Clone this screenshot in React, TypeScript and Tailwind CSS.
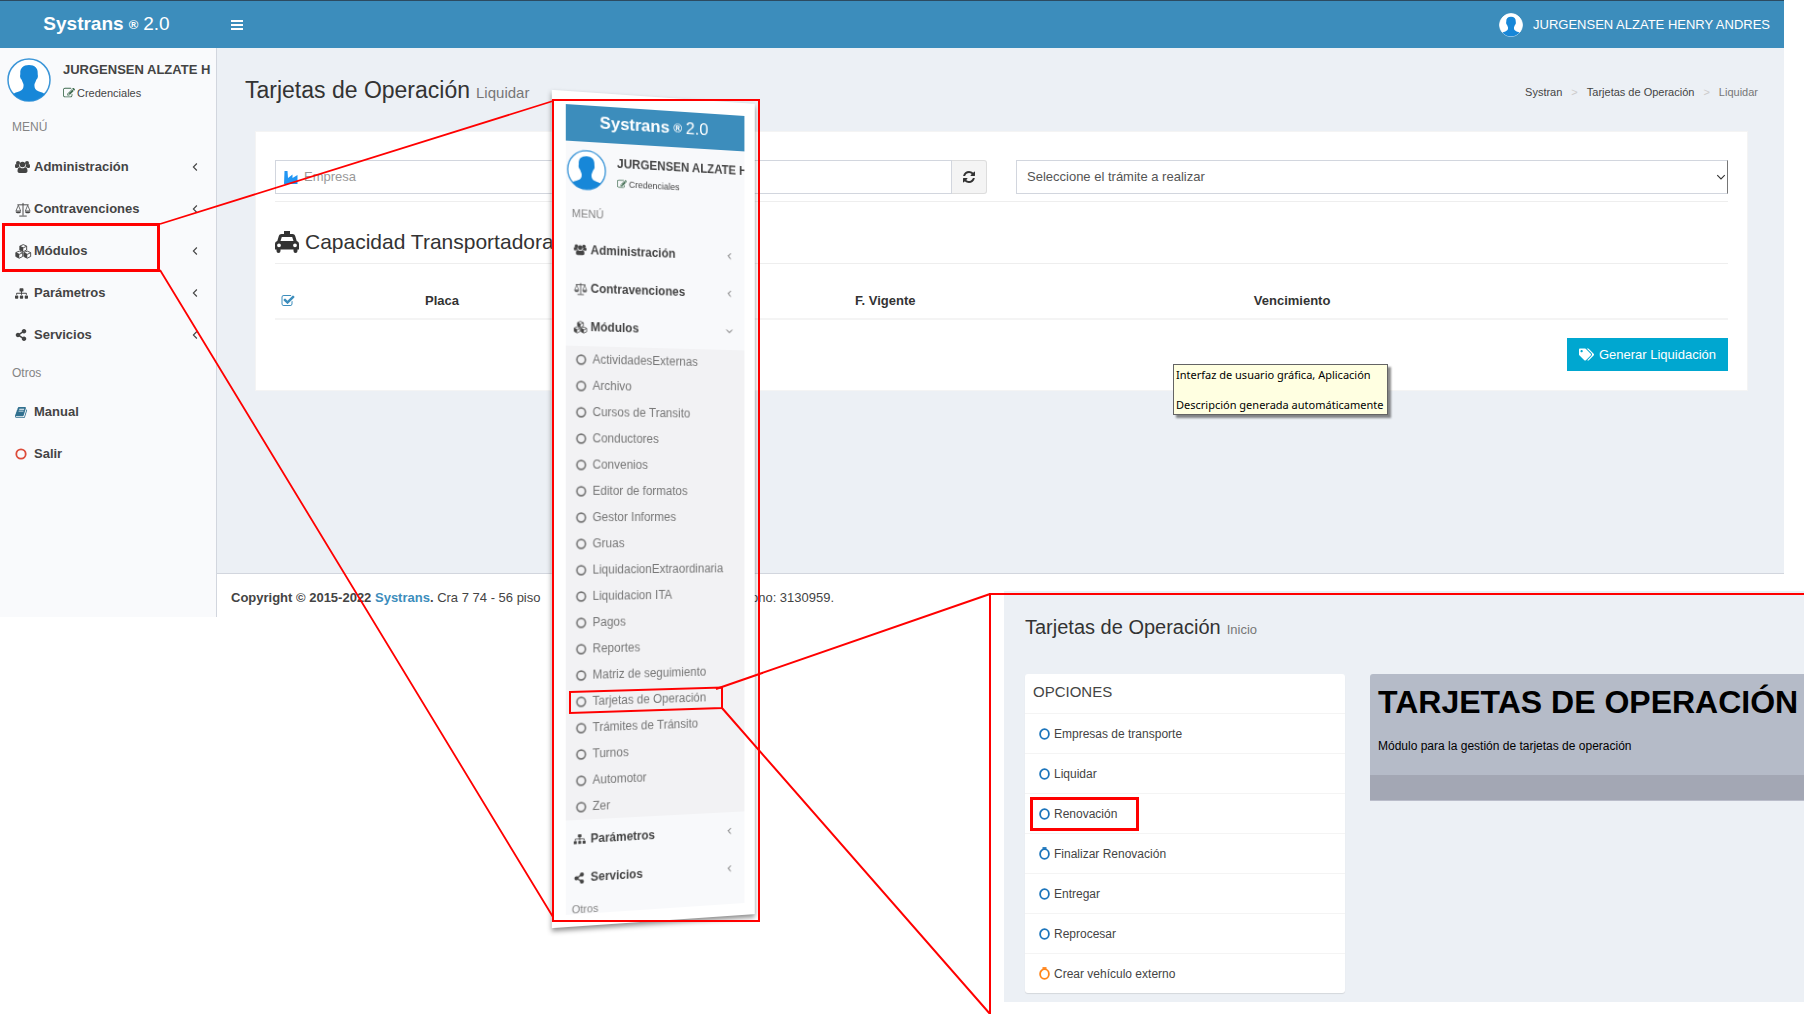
import React from "react";
import { FaShareAlt, FaSitemap, FaTags } from "react-icons/fa";

type IconProps = { className?: string };

const UsersIcon = ({ className }: IconProps) => (
  <svg viewBox="0 0 30 28" fill="currentColor" className={className} aria-hidden="true">
    <circle cx="6" cy="6" r="4" />
    <circle cx="24" cy="6" r="4" />
    <circle cx="15" cy="9" r="5.6" />
    <path d="M9.3 14C7.4 14 5.700 14.800 4.500 16H3C1.300 16 0 15.200 0 13.400 0 12 0 8 2 8c.4 0 2 1.400 4 1.400.7 0 1.400-.1 2-.3V10c0 1.400.5 2.800 1.300 4z" />
    <path d="M20.700 14c1.900 0 3.600.8 4.800 2H27c1.700 0 3-.8 3-2.600C30 12 30 8 28 8c-.4 0-2 1.400-4 1.400-.7 0-1.400-.1-2-.3V10c0 1.400-.5 2.800-1.300 4z" />
    <path d="M20 14.500c4 .1 5 4 5 7.500 0 2.600-1.600 4-4 4H9c-2.400 0-4-1.400-4-4 0-3.500 1-7.400 5-7.500.4 0 2 2.100 5 2.100s4.600-2.100 5-2.100z" />
  </svg>
);

const ScaleIcon = ({ className }: IconProps) => (
  <svg viewBox="0 0 34 32" fill="none" stroke="currentColor" strokeWidth="2" className={className} aria-hidden="true">
    <path d="M17 2v27M9 30h16M5 6h24" />
    <path d="M7 7 2 19h10zM27 7l-5 12h10z" strokeWidth="1.600" />
    <path d="M1 20h12c-1 3-3 4-6 4s-5-1-6-4zM21 20h12c-1 3-3 4-6 4s-5-1-6-4z" fill="currentColor" stroke="none" />
  </svg>
);

const Cube = ({ x, y }: { x: number; y: number }) => (
  <g transform={`translate(${x} ${y})`}>
    <path d="M8 1.200 14.800 4.200V12L8 15.400 1.200 12V4.200z" fill="none" stroke="currentColor" strokeWidth="1.800" />
    <path d="M8 7.500V15.400L1.200 12V4.500z" fill="currentColor" />
    <path d="M1.200 4.500 8 7.600l6.800-3.100" fill="none" stroke="currentColor" strokeWidth="1.800" />
  </g>
);

const CubesIcon = ({ className }: IconProps) => (
  <svg viewBox="0 0 33 30" className={className} aria-hidden="true">
    <Cube x={8} y={0} />
    <Cube x={0} y={13} />
    <Cube x={16} y={13} />
  </svg>
);

const BookIcon = ({ className }: IconProps) => (
  <svg viewBox="0 0 1792 1792" fill="currentColor" className={className} aria-hidden="true">
    <path d="M1639 478q40 57 18 129l-275 906q-19 64-76.5 107.500t-122.500 43.500h-923q-77 0-148.500-53.500t-99.500-131.500q-24-67-2-127 0-4 3-27t4-37q1-8-3-21.500t-3-19.500q2-11 8-21t16.500-23.500 16.500-23.500q23-38 45-91.500t30-91.500q3-10 .5-30t-.5-28q3-11 17-28t17-23q21-36 42-92t25-90q1-9-2.500-32t.5-28q4-13 22-30.500t22-22.500q19-26 42.500-84.500t27.500-96.500q1-8-3-25.500t-2-26.500q2-8 9-18t18-23 17-21q8-12 16.500-30.500t15-35 16-36 19.500-32 26.500-23.500 36-11.500 47.500 5.500l-1 3q38-9 51-9h761q74 0 114 56t18 130l-274 906q-36 119-71.500 153.500t-128.500 34.500h-869q-27 0-38 15-11 16-1 43 24 70 144 70h923q29 0 56-15.500t35-41.500l300-987q7-22 5-57 38 15 59 43zm-1064 2q-4 13 2 22.500t20 9.500h608q13 0 25.500-9.500t16.500-22.500l21-64q4-13-2-22.500t-20-9.500h-608q-13 0-25.500 9.500t-16.500 22.500zm-83 256q-4 13 2 22.500t20 9.500h608q13 0 25.500-9.500t16.500-22.500l21-64q4-13-2-22.500t-20-9.500h-608q-13 0-25.500 9.500t-16.500 22.500z" />
  </svg>
);

const EditIcon = ({ className }: IconProps) => (
  <svg viewBox="0 0 1792 1792" fill="currentColor" className={className} aria-hidden="true">
    <path d="M888 1184l116-116-152-152-116 116v56h96v96h56zm440-720q-16-16-33 1l-350 350q-17 17-1 33t33-1l350-350q17-17 1-33zm80 594v190q0 119-84.500 203.500t-203.500 84.500h-832q-119 0-203.500-84.500t-84.500-203.500v-832q0-119 84.500-203.500t203.500-84.500h832q63 0 117 25 15 7 18 23 3 17-9 29l-49 49q-14 14-32 8-23-6-45-6h-832q-66 0-113 47t-47 113v832q0 66 47 113t113 47h832q66 0 113-47t47-113v-126q0-13 9-22l64-64q15-15 35-7t20 29zm-96-738l288 288-672 672h-288v-288zm444 132l-92 92-288-288 92-92q28-28 68-28t68 28l152 152q28 28 28 68t-28 68z" />
  </svg>
);

const CheckIcon = ({ className }: IconProps) => (
  <svg viewBox="0 0 1792 1792" fill="currentColor" className={className} aria-hidden="true">
    <path d="M1472 930v318q0 119-84.500 203.500t-203.500 84.500h-832q-119 0-203.500-84.500t-84.500-203.500v-832q0-119 84.500-203.500t203.500-84.500h832q63 0 117 25 15 7 18 23 3 17-9 29l-49 49q-10 10-23 10-3 0-9-2-23-6-45-6h-832q-66 0-113 47t-47 113v832q0 66 47 113t113 47h832q66 0 113-47t47-113v-254q0-13 9-22l64-64q10-10 23-10 6 0 12 3 20 8 20 29zm231-489l-814 814q-24 24-57 24t-57-24l-430-430q-24-24-24-57t24-57l110-110q24-24 57-24t57 24l263 263 647-647q24-24 57-24t57 24l110 110q24 24 24 57t-24 57z" />
  </svg>
);

const RefreshIcon = ({ className }: IconProps) => (
  <svg viewBox="0 0 1792 1792" fill="currentColor" className={className} aria-hidden="true">
    <path d="M1639 1056q0 5-1 7-64 268-268 434.500t-478 166.500q-146 0-282.500-55t-243.500-157l-129 129q-19 19-45 19t-45-19-19-45v-448q0-26 19-45t45-19h448q26 0 45 19t19 45-19 45l-137 137q71 66 161 102t187 36q134 0 250-65t186-179q11-17 53-117 8-23 30-23h192q13 0 22.500 9.500t9.500 22.500zm25-800v448q0 26-19 45t-45 19h-448q-26 0-45-19t-19-45 19-45l138-138q-148-137-349-137-134 0-250 65t-186 179q-11 17-53 117-8 23-30 23h-199q-13 0-22.500-9.500t-9.500-22.500v-7q65-268 270-434.500t480-166.500q146 0 284 55.500t245 156.500l130-129q19-19 45-19t45 19 19 45z" />
  </svg>
);

const IndustryIcon = ({ className }: IconProps) => (
  <svg viewBox="0 0 14 13" fill="currentColor" className={className} aria-hidden="true">
    <path d="M.5 0h3l.5 7 4.500-3.500V7L13.500 4v9H0z" />
  </svg>
);

const TaxiIcon = ({ className }: IconProps) => (
  <svg viewBox="0 0 24 22" className={className} aria-hidden="true">
    <path
      fill="currentColor"
      fillRule="evenodd"
      d="M9 0h6v3h2.500c1.400 0 2.300.8 2.700 2l1.500 5c1.400.3 2.300 1.500 2.300 3v5.500h-1.500V20a2 2 0 0 1-4 0v-1.500h-13V20a2 2 0 0 1-4 0v-1.500H0V13c0-1.500.9-2.700 2.300-3l1.500-5c.4-1.200 1.300-2 2.700-2H9zM6.800 6 5.500 10h13L17.200 6zM4 12.400a1.900 1.900 0 1 0 0 3.800 1.900 1.900 0 0 0 0-3.800zm16 0a1.900 1.900 0 1 0 0 3.800 1.900 1.900 0 0 0 0-3.800z"
    />
  </svg>
);

const RingIcon = ({ className }: IconProps) => (
  <svg viewBox="0 0 12 12" fill="none" stroke="currentColor" strokeWidth="1.800" className={className} aria-hidden="true">
    <circle cx="6" cy="6" r="4.700" />
  </svg>
);

const OptionRing = ({ className, knob }: IconProps & { knob?: boolean }) => (
  <svg viewBox="0 0 11 13" fill="none" stroke="currentColor" strokeWidth="1.800" className={className} aria-hidden="true">
    <ellipse cx="5.500" cy="7" rx="4.400" ry="4.900" />
    {knob && <path d="M3.500 1h4" />}
  </svg>
);

const AngleIcon = ({ className, down }: IconProps & { down?: boolean }) => (
  <svg viewBox="0 0 8 8" fill="none" stroke="currentColor" strokeWidth="0.900" className={className} aria-hidden="true">
    <path d={down ? "M1 2.500l3 3 3-3" : "M5.500 1.200l-2.800 2.800 2.800 2.800"} />
  </svg>
);

const Avatar = ({ className, ring = true }: IconProps & { ring?: boolean }) => (
  <svg viewBox="0 0 44 44" className={className} aria-hidden="true">
    <circle cx="22" cy="22" r="21" fill="#fff" stroke={ring ? "#3c96d8" : "#fff"} strokeWidth="1.500" />
    <path
      fill="#1787d8"
      d="M22 7c5.800 0 9 3 8.700 8.500-.1 1.500.6 2.300 0 4-.4 1.500-1.200 1.600-1.500 2.600-.7 2.300-1.600 3.200-1.800 5 0 3.500 1.200 5 4 6.200 3 1.300 5 1.300 6.300 2.800C33.500 40.500 28 43 22 43S10.500 40.500 6.300 36.100c1.300-1.500 3.300-1.500 6.300-2.800 2.800-1.200 4-2.700 4-6.200-.2-1.800-1.100-2.700-1.800-5-.3-1-1.100-1.100-1.500-2.600-.6-1.700.1-2.500 0-4C13 10 16.200 7 22 7z"
    />
  </svg>
);

const submenu = [
  "ActividadesExternas",
  "Archivo",
  "Cursos de Transito",
  "Conductores",
  "Convenios",
  "Editor de formatos",
  "Gestor Informes",
  "Gruas",
  "LiquidacionExtraordinaria",
  "Liquidacion ITA",
  "Pagos",
  "Reportes",
  "Matriz de seguimiento",
  "Tarjetas de Operación",
  "Trámites de Tránsito",
  "Turnos",
  "Automotor",
  "Zer",
];

const options: { label: string; knob?: boolean; color: string }[] = [
  { label: "Empresas de transporte", color: "text-[#1c75bc]" },
  { label: "Liquidar", color: "text-[#1c75bc]" },
  { label: "Renovación", color: "text-[#1c75bc]" },
  { label: "Finalizar Renovación", color: "text-[#1c75bc]", knob: true },
  { label: "Entregar", color: "text-[#1c75bc]" },
  { label: "Reprocesar", color: "text-[#1c75bc]" },
  { label: "Crear vehículo externo", color: "text-[#ff851b]", knob: true },
];

type MenuRowProps = { icon: React.ReactNode; label: string; arrow?: boolean };

const MenuRow = ({ icon, label, arrow = true }: MenuRowProps) => (
  <li>
    <a href="#" className="flex h-[42px] items-center pr-4 pl-[15px] text-[13px] font-bold text-[#444]">
      <span className="flex w-[19px] items-center">{icon}</span>
      <span className="flex-1">{label}</span>
      {arrow && <AngleIcon className="size-2.5" />}
    </a>
  </li>
);

const FloatRow = ({ icon, label, down }: { icon: React.ReactNode; label: string; down?: boolean }) => (
  <li>
    <a href="#" className="flex h-[38px] items-center pr-3 pl-2 text-xs font-bold text-[#444]">
      <span className="flex w-[17px] items-center">{icon}</span>
      <span className="flex-1">{label}</span>
      <AngleIcon down={down} className="size-2" />
    </a>
  </li>
);

const Sidebar = () => (
  <aside className="w-[217px] shrink-0 border-r border-[#d2d6de] bg-[#f9fafc]">
    <div className="flex h-[60px] items-start gap-3 pt-2.5 pl-[7px]">
      <Avatar className="size-11 shrink-0" />
      <div className="whitespace-nowrap">
        <p className="text-[13px] leading-6 font-bold text-[#444]">JURGENSEN ALZATE H</p>
        <a href="#" className="flex items-center gap-0.5 text-[11px] leading-[22px] text-[#444]">
          <EditIcon className="size-3 text-[#3f6b4f]" />
          Credenciales
        </a>
      </div>
    </div>
    <nav aria-label="Menú principal">
      <h2 className="h-[38px] pl-3 text-xs leading-[38px] text-[#848484]">MENÚ</h2>
      <ul>
        <MenuRow icon={<UsersIcon className="h-3.5 w-[15px]" />} label="Administración" />
        <MenuRow icon={<ScaleIcon className="h-[15px] w-4" />} label="Contravenciones" />
        <MenuRow icon={<CubesIcon className="h-[15px] w-[17px]" />} label="Módulos" />
        <MenuRow icon={<FaSitemap className="size-[13px]" />} label="Parámetros" />
        <MenuRow icon={<FaShareAlt className="size-3" />} label="Servicios" />
      </ul>
      <h2 className="h-[35px] pl-3 text-xs leading-[35px] text-[#848484]">Otros</h2>
      <ul>
        <MenuRow icon={<BookIcon className="size-[13px] text-[#31708f]" />} label="Manual" arrow={false} />
        <MenuRow icon={<RingIcon className="size-3 text-[#dd4b39]" />} label="Salir" arrow={false} />
      </ul>
    </nav>
  </aside>
);

const MainCard = () => (
  <section className="border border-[#f4f4f4] bg-white px-[19px] pt-7 pb-[18px]">
    <div className="flex h-[34px] gap-[29px]">
      <div className="flex flex-[712]">
        <label className="flex flex-1 items-center gap-1.5 border border-[#d2d6de] pl-2">
          <IndustryIcon className="h-[13px] w-3.5 text-[#2196f3]" />
          <input
            aria-label="Empresa"
            placeholder="Empresa"
            className="min-w-0 flex-1 text-[13px] outline-none placeholder:text-[#999]"
          />
        </label>
        <button
          type="button"
          aria-label="Actualizar"
          className="flex w-[35px] items-center justify-center rounded-r-[3px] border border-l-0 border-[#ddd] bg-[#f4f4f4] text-[#333]"
        >
          <RefreshIcon className="size-3.5" />
        </button>
      </div>
      <div className="relative flex flex-[712]">
        <select
          aria-label="Trámite"
          className="w-full appearance-none border border-[#d2d6de] border-r-[#767676] bg-white px-2.5 text-[13px] text-[#555] outline-none"
        >
          <option>Seleccione el trámite a realizar</option>
        </select>
        <AngleIcon down className="pointer-events-none absolute top-3 right-0.5 size-2.5 text-[#333]" />
      </div>
    </div>
    <div className="mt-[7px] border-t border-[#eee]" />
    <h2 className="flex h-[62px] items-center gap-1.5 border-b border-[#eee] pt-[18px] text-[21px] text-[#333]">
      <TaxiIcon className="h-[22px] w-6" />
      Capacidad Transportadora
    </h2>
    <table className="w-full table-fixed text-[13px] text-[#333]">
      <colgroup>
        <col className="w-[2%]" />
        <col className="w-[19%]" />
        <col className="w-[8%]" />
        <col className="w-[26%]" />
        <col className="w-[30%]" />
        <col className="w-[15%]" />
      </colgroup>
      <thead>
        <tr className="h-[55px] border-b-2 border-[#f4f4f4]">
          <th className="pt-5">
            <label className="relative ml-1.5 block size-3.5">
              <input type="checkbox" defaultChecked aria-label="Seleccionar todos" className="absolute inset-0 appearance-none" />
              <CheckIcon className="size-3.5 text-[#3c8dbc]" />
            </label>
          </th>
          <th className="pt-5">Placa</th>
          <th />
          <th className="pt-5">F. Vigente</th>
          <th className="pt-5">Vencimiento</th>
          <th />
        </tr>
      </thead>
    </table>
    <div className="flex justify-end pt-[18px] pb-px">
      <button type="button" className="flex h-[33px] items-center gap-[5px] bg-[#00a7d0] px-3 text-[13px] text-white">
        <FaTags className="h-[13px] w-[15px]" />
        Generar Liquidación
      </button>
    </div>
  </section>
);

const FloatingMenu = () => (
  <div className="absolute top-[97px] left-[550px] h-[824px] w-[210px] bg-white pt-[13px] pr-[11px] pl-3.5 shadow-[0_3px_5px_rgba(0,0,0,0.45)] transform-[perspective(1600px)_rotateY(15deg)]">
    <div className="h-[799px] overflow-hidden bg-[#f8f9fb]">
      <p className="flex h-9 items-center justify-center gap-1 bg-[#3c8dbc] pr-1 pb-0.5 text-[17px] text-white">
        <b>Systrans</b>
        <b className="text-xs">®</b>
        2.0
      </p>
      <div className="flex h-[60px] items-start gap-[11px] pt-2 pl-px">
        <Avatar className="size-10 shrink-0" />
        <div className="whitespace-nowrap">
          <p className="pt-1 text-xs leading-4 font-bold text-[#444]">JURGENSEN ALZATE H</p>
          <a href="#" className="flex items-center gap-0.5 text-[9px] leading-6 text-[#444]">
            <EditIcon className="size-2.5 text-[#3f6b4f]" />
            Credenciales
          </a>
        </div>
      </div>
      <h2 className="h-7 pl-1.5 text-[11px] leading-[22px] text-[#848484]">MENÚ</h2>
      <ul>
        <FloatRow icon={<UsersIcon className="h-3 w-[13px]" />} label="Administración" />
        <FloatRow icon={<ScaleIcon className="h-[13px] w-3.5" />} label="Contravenciones" />
        <FloatRow icon={<CubesIcon className="h-[13px] w-3.5" />} label="Módulos" down />
      </ul>
      <ul className="bg-[#f2f2f4]">
        {submenu.map((label) => (
          <li key={label}>
            <a href="#" className="flex h-[26px] items-center gap-1.5 pl-2.5 text-xs text-[#777]">
              <RingIcon className="size-[11px]" />
              {label}
            </a>
          </li>
        ))}
      </ul>
      <ul>
        <FloatRow icon={<FaSitemap className="size-3" />} label="Parámetros" />
        <FloatRow icon={<FaShareAlt className="size-[11px]" />} label="Servicios" />
      </ul>
      <h2 className="pt-1 pl-1.5 text-[11px] leading-4 text-[#848484]">Otros</h2>
    </div>
  </div>
);

const OptionsPanel = () => (
  <section className="relative -mt-[26px] ml-[1004px] h-[411px] bg-[#ecf0f5] pt-6 pl-[21px]">
    <h1 className="flex items-baseline gap-1.5 text-xl leading-6 text-[#333]">
      Tarjetas de Operación <small className="text-[13px] text-[#777]">Inicio</small>
    </h1>
    <div className="mt-8 flex items-start gap-[25px]">
      <div className="w-80 shrink-0 rounded-[3px] bg-white shadow-[0_1px_1px_rgba(0,0,0,0.1)]">
        <h2 className="h-10 border-b border-[#f4f4f4] pl-2 text-[15px] leading-[35px] text-[#444]">OPCIONES</h2>
        <ul className="divide-y divide-[#f4f4f4]">
          {options.map((o) => (
            <li key={o.label}>
              <a href="#" className="flex h-[39px] items-center gap-1 pl-3.5 text-xs text-[#444]">
                <OptionRing knob={o.knob} className={`h-[13px] w-[11px] ${o.color}`} />
                {o.label}
              </a>
            </li>
          ))}
        </ul>
      </div>
      <div className="flex-1 rounded-tl-[3px] bg-[#b5bbc8] text-black">
        <div className="h-[101px] pt-2 pl-2">
          <h2 className="text-[32px] leading-10 font-bold whitespace-nowrap">TARJETAS DE OPERACIÓN</h2>
          <p className="mt-3.5 text-xs leading-5">Módulo para la gestión de tarjetas de operación</p>
        </div>
        <div className="h-[26px] border-b border-[#babdca] bg-[#a3a7b4]" />
      </div>
    </div>
  </section>
);

const Annotations = () => (
  <svg
    className="pointer-events-none absolute top-0 left-0 h-[1014px] w-[1804px]"
    viewBox="0 0 1804 1014"
    fill="none"
    stroke="#f00"
    strokeWidth="2"
    aria-hidden="true"
  >
    <rect x="3.500" y="224.500" width="155" height="46" strokeWidth="3" />
    <path d="M160 224 553 101M160 270 553 917" strokeWidth="1.800" />
    <rect x="553" y="100" width="206" height="821" />
    <path d="M570 692 722 687.500V708L570 713z" />
    <path d="M716 689 990 594M722 708 990 1014" strokeWidth="2" />
    <path d="M990 1014V594H1804" />
    <rect x="1031.500" y="798.500" width="106" height="31" strokeWidth="3" />
  </svg>
);

export default function App() {
  return (
    <div className="relative min-h-screen overflow-hidden bg-white font-['Liberation_Sans',Arial,sans-serif]">
      <div className="mr-5">
        <header className="flex h-12 items-center border-t border-[#2c4a60] bg-[#3c8dbc] text-white">
          <a href="#" className="flex w-[217px] items-center justify-center gap-[5px] pr-1 text-[19px]">
            <b>Systrans</b>
            <b className="text-[13px]">®</b>
            2.0
          </a>
          <button type="button" aria-label="Alternar menú" className="ml-3.5 flex w-3 flex-col gap-0.5">
            <span className="h-0.5 bg-white" />
            <span className="h-0.5 bg-white" />
            <span className="h-0.5 bg-white" />
          </button>
          <a href="#" className="mr-3.5 ml-auto flex items-center gap-2.5 text-[13px]">
            <Avatar ring={false} className="size-6" />
            JURGENSEN ALZATE HENRY ANDRES
          </a>
        </header>
        <div className="flex">
          <Sidebar />
          <div className="flex min-w-0 flex-1 flex-col">
            <main className="h-[525px] bg-[#ecf0f5] pr-9 pl-[38px]">
              <div className="-mr-2.5 -ml-2.5 flex h-[83px] items-center justify-between pt-0.5">
                <h1 className="flex items-baseline gap-1.5 text-[23px] text-[#333]">
                  Tarjetas de Operación <small className="text-[15px] text-[#777]">Liquidar</small>
                </h1>
                <nav aria-label="Ruta" className="flex items-center gap-[9px] pt-1 text-[11px] text-[#444]">
                  <a href="#">Systran</a>
                  <span className="text-[#ccc]">&gt;</span>
                  <a href="#">Tarjetas de Operación</a>
                  <span className="text-[#ccc]">&gt;</span>
                  <span className="text-[#777]">Liquidar</span>
                </nav>
              </div>
              <MainCard />
            </main>
            <footer className="flex h-11 items-center border-t border-[#d2d6de] bg-white pt-1 pl-3.5 text-[13px] text-[#444]">
              <p>
                <b>
                  Copyright © 2015-2022{" "}
                  <a href="#" className="text-[#3c8dbc]">
                    Systrans
                  </a>
                  .
                </b>{" "}
                Cra 7 74 - 56 piso
              </p>
              <p className="ml-[183px]">Teléfono: 3130959.</p>
            </footer>
          </div>
        </div>
      </div>
      <OptionsPanel />
      <FloatingMenu />
      <div
        role="tooltip"
        className="absolute top-[364px] left-[1173px] border border-[#646464] bg-[#ffffe1] pr-1 pl-0.5 font-['Noto_Sans',sans-serif] text-[11px] leading-[15px] whitespace-nowrap text-black shadow-[3px_3px_2px_rgba(0,0,0,0.45)]"
      >
        <p className="pt-0.5">Interfaz de usuario gráfica, Aplicación</p>
        <p className="pt-[15px] pb-0.5">Descripción generada automáticamente</p>
      </div>
      <Annotations />
    </div>
  );
}
